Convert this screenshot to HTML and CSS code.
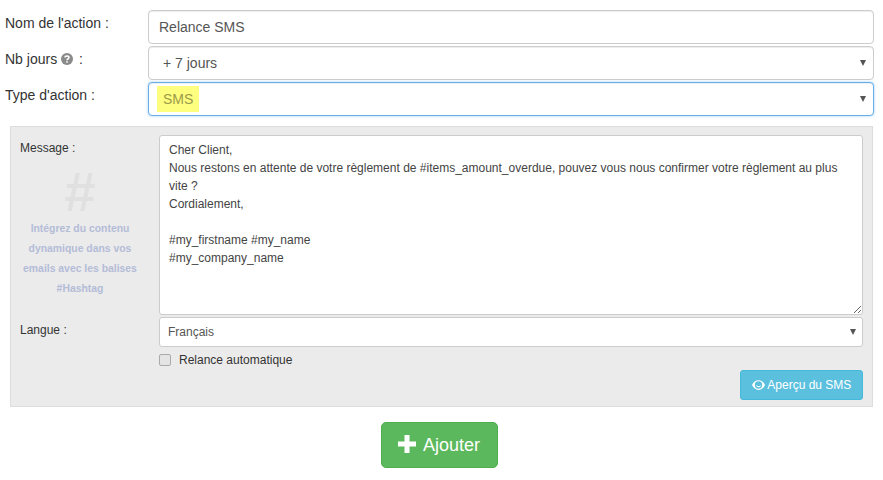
FILE: index.html
```html
<!DOCTYPE html>
<html lang="fr">
<head>
    <meta charset="UTF-8">
    <title>Relance SMS</title>
    <link rel="stylesheet" href="styles.css">
</head>
<body>
    <form class="action-form">
        <div class="form-row">
            <label class="form-label">Nom de l'action :</label>
            <input class="form-control" type="text" value="Relance SMS">
        </div>
        <div class="form-row">
            <label class="form-label">Nb jours
                <svg class="help-icon" viewBox="0 0 12 12" width="12" height="12">
                    <circle cx="6" cy="6" r="6" fill="#8a8a8a"/>
                    <path d="M4 4.6C4 3.5 4.9 3 6 3s2 .6 2 1.6c0 1.500-2 1.300-2 2.600" fill="none" stroke="#fff" stroke-width="1.500"/>
                    <rect x="5.200" y="8.200" width="1.600" height="1.500" fill="#fff"/>
                </svg><span class="label-colon">:</span>
            </label>
            <div class="form-control select-box select-indent">
                <span>+ 7 jours</span>
                <i class="select-arrow"></i>
            </div>
        </div>
        <div class="form-row">
            <label class="form-label">Type d'action :</label>
            <div class="form-control select-box select-focus">
                <span class="highlight">SMS</span>
                <i class="select-arrow"></i>
            </div>
        </div>

        <section class="sms-panel">
            <div class="panel-row">
                <div class="panel-side">
                    <label class="panel-label">Message :</label>
                    <div class="hash-mark">#</div>
                    <p class="hash-hint">Intégrez du contenu dynamique dans vos emails avec les balises #Hashtag</p>
                </div>
                <textarea class="message-box">Cher Client,
Nous restons en attente de votre règlement de #items_amount_overdue, pouvez vous nous confirmer votre règlement au plus vite ?
Cordialement,

#my_firstname #my_name
#my_company_name</textarea>
            </div>
            <div class="panel-row lang-row">
                <div class="panel-side">
                    <label class="panel-label">Langue :</label>
                </div>
                <div class="lang-select select-box">
                    <span>Français</span>
                    <i class="select-arrow"></i>
                </div>
            </div>
            <div class="auto-row">
                <span class="fake-check"></span>
                <span>Relance automatique</span>
            </div>
            <div class="preview-row">
                <button type="button" class="btn btn-info">
                    <svg viewBox="0 0 16 12" width="13" height="10">
                        <path fill="#fff" fill-rule="evenodd" d="M8 0c3.400 0 6.300 2.300 8 6-1.700 3.700-4.600 6-8 6S1.700 9.700 0 6c1.700-3.700 4.600-6 8-6zM8 1.500A4.500 4.500 0 0 0 3.500 6 4.500 4.500 0 0 0 8 10.500 4.500 4.500 0 0 0 12.500 6 4.500 4.500 0 0 0 8 1.500z"/>
                        <path fill="#fff" d="M4.800 5.500c.3 2 1.500 3.400 3.200 3.400 1.600 0 2.900-1.200 3.200-3-.8 1-1.900 1.500-3.200 1.500-1.300 0-2.400-.6-3.200-1.900z"/>
                    </svg>
                    Aperçu du SMS
                </button>
            </div>
        </section>

        <div class="submit-row">
            <button type="button" class="btn btn-success">
                <svg viewBox="0 0 18 18" width="18" height="18">
                    <path fill="#fff" d="M6.500 0h5v6.500H18v5h-6.500V18h-5v-6.500H0v-5h6.500z"/>
                </svg>
                Ajouter
            </button>
        </div>
    </form>
</body>
</html>
```

FILE: styles.css
```css
/* General Styles */
* {
    margin: 0;
    padding: 0;
    box-sizing: border-box;
}

body {
    font-family: 'Liberation Sans', Arial, sans-serif;
    font-size: 14px;
    color: #333;
    background: #fff;
}

.action-form {
    width: 883px;
    padding-top: 10px;
}

/* Top fields */
.form-row {
    display: flex;
    margin-bottom: 2px;
    padding: 0 9px 0 5px;
}

.form-label {
    width: 143px;
    flex: none;
    padding-top: 5px;
    line-height: 17px;
}

.help-icon {
    vertical-align: -1px;
}

.label-colon {
    margin-left: 6px;
}

.form-control {
    flex: 1;
    height: 34px;
    padding: 6px 10px;
    border: 1px solid #ccc;
    border-radius: 4px;
    background: #fff;
    color: #555;
    font: 14px 'Liberation Sans', Arial, sans-serif;
    box-shadow: inset 0 1px 1px rgba(0, 0, 0, 0.075);
}

/* Select look */
.select-box {
    display: flex;
    align-items: center;
    justify-content: space-between;
}

.select-indent {
    padding-left: 14px;
}

.select-focus {
    padding-left: 8px;
    border-color: #66afe9;
    box-shadow: inset 0 1px 1px rgba(0, 0, 0, 0.075), 0 0 3px rgba(102, 175, 233, 0.6);
}

.highlight {
    display: block;
    padding: 5px 6px;
    line-height: 16px;
    background: #ffff7f;
    color: #9a9a4a;
}

.select-arrow {
    width: 0;
    height: 0;
    margin-right: -3px;
    border-left: 3px solid transparent;
    border-right: 3px solid transparent;
    border-top: 6px solid #555;
}

/* Grey panel */
.sms-panel {
    width: 863px;
    height: 281px;
    margin: 10px 0 0 10px;
    padding: 8px 9px 0;
    background: #ebebeb;
    border: 1px solid #ddd;
    font-size: 12px;
}

.panel-row {
    display: flex;
}

.lang-row {
    margin-top: 2px;
}

.panel-side {
    width: 139px;
    flex: none;
}

.panel-label {
    display: block;
    line-height: 14px;
    padding-top: 6px;
}

.hash-mark {
    width: 120px;
    margin-top: 7px;
    font-size: 56px;
    font-weight: bold;
    line-height: 60px;
    text-align: center;
    color: #e0e0e0;
}

.hash-hint {
    width: 120px;
    margin-top: -3px;
    font-size: 10.4px;
    font-weight: bold;
    line-height: 20px;
    text-align: center;
    color: #b4bcd8;
}

.message-box {
    flex: 1;
    display: block;
    height: 180px;
    padding: 5px 9px;
    border: 1px solid #ccc;
    border-radius: 3px;
    background: #fff;
    color: #444;
    font: 12px/18px 'Liberation Sans', Arial, sans-serif;
    resize: vertical;
    overflow: hidden;
}

.lang-select {
    flex: 1;
    height: 30px;
    padding: 0 9px 0 8px;
    border: 1px solid #ccc;
    border-radius: 3px;
    background: #fff;
    color: #555;
}

.auto-row {
    display: flex;
    align-items: center;
    margin: 6px 0 0 139px;
    line-height: 14px;
}

.fake-check {
    width: 12px;
    height: 12px;
    margin-right: 8px;
    border: 1px solid #aaa;
    border-radius: 2px;
    background: #e4e4e4;
}

.preview-row {
    display: flex;
    justify-content: flex-end;
    margin-top: 3px;
}

/* Buttons */
.btn {
    border: 1px solid transparent;
    border-radius: 3px;
    color: #fff;
    font-family: 'Liberation Sans', Arial, sans-serif;
    cursor: pointer;
}

.btn-info {
    width: 123px;
    height: 30px;
    background: #5bc0de;
    border-color: #46b8da;
    font-size: 12px;
}

.btn-info svg {
    vertical-align: -1px;
}

.btn-success {
    width: 117px;
    height: 46px;
    background: #5cb85c;
    border-color: #4cae4c;
    border-radius: 5px;
    font-size: 18px;
}

.btn-success svg {
    vertical-align: -2px;
    margin-right: 3px;
}

.submit-row {
    display: flex;
    justify-content: center;
    margin-top: 15px;
    padding-right: 5px;
}
```
